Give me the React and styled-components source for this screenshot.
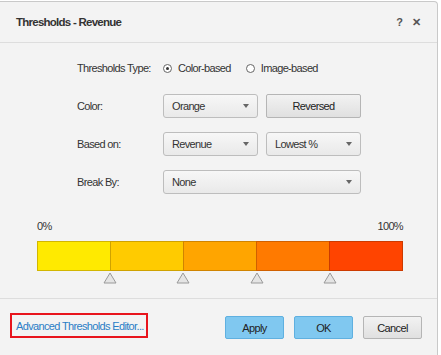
import React from 'react';
import styled, { createGlobalStyle } from 'styled-components';

const GlobalStyle = createGlobalStyle`
  html, body {
    margin: 0;
    padding: 0;
    background: #ffffff;
    overflow: hidden;
  }
  body {
    font-family: "Liberation Sans", Arial, sans-serif;
    font-size: 11px;
    letter-spacing: -0.65px;
    color: #333;
  }
`;

const Dialog = styled.div`
  margin-top: 1px;
  width: 438px;
  height: 370px;
  box-sizing: border-box;
  background: #f3f3f3;
  border-top: 1px solid #c9c9c9;
  border-right: 1px solid #c9c9c9;
  border-top-right-radius: 4px;
  display: flex;
  flex-direction: column;
`;

const Header = styled.div`
  height: 41px;
  box-sizing: border-box;
  display: flex;
  align-items: center;
  justify-content: space-between;
  padding: 0 16px 0 16px;
  border-bottom: 1px solid #dddddd;
`;

const Title = styled.div`
  font-size: 11.5px;
  font-weight: bold;
  color: #333;
  letter-spacing: -0.75px;
`;

const HeaderIcons = styled.div`
  display: flex;
  gap: 9px;
  font-weight: bold;
  color: #555;
  font-size: 11px;
  letter-spacing: 0;
`;

const Body = styled.div`
  height: 255px;
  box-sizing: border-box;
  padding-top: 13px;
`;

const Form = styled.div`
  display: grid;
  grid-template-columns: 78px 95px 95px;
  grid-auto-rows: 24px;
  column-gap: 8px;
  row-gap: 14px;
  padding-left: 77px;
`;

const Label = styled.div`
  display: flex;
  align-items: center;
  color: #333;
  white-space: nowrap;
`;

const RadioGroup = styled.div`
  grid-column: span 2;
  display: flex;
  align-items: center;
`;

const RadioOption = styled.label`
  display: flex;
  align-items: center;
  gap: 6px;
  margin-right: ${(p) => p.$space || 0}px;
`;

const RadioCircle = styled.span`
  width: 9px;
  height: 9px;
  box-sizing: border-box;
  border: 1px solid #666;
  border-radius: 50%;
  background: #fff;
  display: flex;
  align-items: center;
  justify-content: center;
  &::after {
    content: '';
    width: 3px;
    height: 3px;
    border-radius: 50%;
    background: ${(p) => (p.$checked ? '#333' : 'transparent')};
  }
`;

const Select = styled.div`
  grid-column: span ${(p) => p.$span || 1};
  box-sizing: border-box;
  display: flex;
  align-items: center;
  justify-content: space-between;
  padding: 0 8px 0 8px;
  border: 1px solid #bdbdbd;
  border-radius: 3px;
  background: linear-gradient(#f7f7f7, #e9e9e9);
  color: #333;
`;

const Caret = styled.span`
  width: 0;
  height: 0;
  border-left: 3px solid transparent;
  border-right: 3px solid transparent;
  border-top: 4px solid #666;
`;

const Button = styled.div`
  box-sizing: border-box;
  display: flex;
  align-items: center;
  justify-content: center;
  border: 1px solid ${(p) => (p.$primary ? '#5fb0e0' : '#b5b5b5')};
  border-radius: 2px;
  background: ${(p) =>
    p.$primary ? '#80c8f0' : 'linear-gradient(#f2f2f2, #e0e0e0)'};
  color: #222;
  width: ${(p) => p.$width || 'auto'};
  height: ${(p) => p.$height || 'auto'};
`;

const Scale = styled.div`
  margin: 25px 0 0 37px;
  width: 366px;
`;

const ScaleLabels = styled.div`
  display: flex;
  justify-content: space-between;
  height: 14px;
  line-height: 14px;
  color: #333;
`;

const Bar = styled.div`
  margin-top: 8px;
  display: flex;
  height: 30px;
`;

const Segment = styled.div`
  flex: 1;
  box-sizing: border-box;
  background: ${(p) => p.$color};
  border: 1px solid ${(p) => p.$edge};
  margin-left: ${(p) => (p.$first ? 0 : -1)}px;
`;

const Markers = styled.div`
  display: flex;
  height: 12px;
  margin-top: 1px;
`;

const MarkerSlot = styled.div`
  flex: 1;
  display: flex;
  justify-content: flex-end;
  &:last-child svg {
    display: none;
  }
`;

const Footer = styled.div`
  border-top: 1px solid #dddddd;
  display: flex;
  align-items: flex-start;
  padding: 14px 15px 0 10px;
`;

const LinkBox = styled.div`
  box-sizing: border-box;
  width: 138px;
  height: 25px;
  border: 2px solid #e8141c;
  display: flex;
  align-items: center;
  padding-left: 4px;
  color: #2a7dc6;
  white-space: nowrap;
`;

const Buttons = styled.div`
  margin-left: auto;
  margin-top: 3px;
  display: flex;
  gap: 10px;
`;

const segments = [
  { color: '#ffea00', edge: '#d2b600' },
  { color: '#ffcb00', edge: '#cfa200' },
  { color: '#ffa500', edge: '#d08400' },
  { color: '#ff7a00', edge: '#d06000' },
  { color: '#ff4400', edge: '#cc3a00' },
];

const Marker = () => (
  <svg width="14" height="12" viewBox="0 0 14 12" style={{ marginRight: -7 }}>
    <path d="M7 1 L13 11 L1 11 Z" fill="#e4e4e4" stroke="#9a9a9a" strokeWidth="1" strokeLinejoin="round" />
  </svg>
);

export default function App() {
  return (
    <>
      <GlobalStyle />
      <Dialog>
        <Header>
          <Title>Thresholds - Revenue</Title>
          <HeaderIcons>
            <span>?</span>
            <span>✕</span>
          </HeaderIcons>
        </Header>
        <Body>
          <Form>
            <Label>Thresholds Type:</Label>
            <RadioGroup>
              <RadioOption $space={15}>
                <RadioCircle $checked />
                Color-based
              </RadioOption>
              <RadioOption>
                <RadioCircle />
                Image-based
              </RadioOption>
            </RadioGroup>

            <Label>Color:</Label>
            <Select>
              Orange
              <Caret />
            </Select>
            <Button>Reversed</Button>

            <Label>Based on:</Label>
            <Select>
              Revenue
              <Caret />
            </Select>
            <Select>
              Lowest %
              <Caret />
            </Select>

            <Label>Break By:</Label>
            <Select $span={2}>
              None
              <Caret />
            </Select>
          </Form>

          <Scale>
            <ScaleLabels>
              <span>0%</span>
              <span>100%</span>
            </ScaleLabels>
            <Bar>
              {segments.map((s, i) => (
                <Segment key={i} $color={s.color} $edge={s.edge} $first={i === 0} />
              ))}
            </Bar>
            <Markers>
              {segments.map((s, i) => (
                <MarkerSlot key={i}>
                  <Marker />
                </MarkerSlot>
              ))}
            </Markers>
          </Scale>
        </Body>
        <Footer>
          <LinkBox>Advanced Thresholds Editor...</LinkBox>
          <Buttons>
            <Button $primary $width="59px" $height="23px">Apply</Button>
            <Button $primary $width="59px" $height="23px">OK</Button>
            <Button $width="59px" $height="23px">Cancel</Button>
          </Buttons>
        </Footer>
      </Dialog>
    </>
  );
}
